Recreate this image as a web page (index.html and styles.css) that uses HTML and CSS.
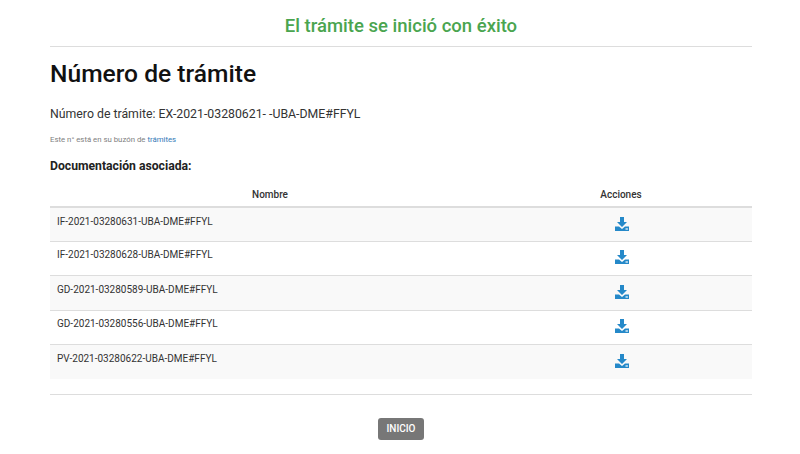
FILE: index.html
```html
<!DOCTYPE html>
<html lang="en">
<head>
    <meta charset="UTF-8">
    <title>Número de trámite</title>
    <link rel="stylesheet" href="styles.css">
</head>
<body>
    <div class="container">
        <h3 class="success-title">El trámite se inició con éxito</h3>
        <hr class="title-rule">

        <h1>Número de trámite</h1>
        <p class="numero">Número de trámite: EX-2021-03280621- -UBA-DME#FFYL</p>
        <p class="nota">Este n° está en su buzón de <a href="#">trámites</a></p>
        <h4>Documentación asociada:</h4>

        <table>
            <thead>
                <tr>
                    <th class="col-nombre">Nombre</th>
                    <th class="col-acciones">Acciones</th>
                </tr>
            </thead>
            <tbody>
                <tr>
                    <td>IF-2021-03280631-UBA-DME#FFYL</td>
                    <td class="accion"><svg class="icon" viewBox="0 0 16 16"><path d="M6 1h4v5h3l-5 5-5-5h3z"/><path d="M1 10.5h4L8 13l3-2.5h4V15H1z"/><rect class="dots" x="11.5" y="12.4" width="2.4" height="1.2"/></svg></td>
                </tr>
                <tr>
                    <td>IF-2021-03280628-UBA-DME#FFYL</td>
                    <td class="accion"><svg class="icon" viewBox="0 0 16 16"><path d="M6 1h4v5h3l-5 5-5-5h3z"/><path d="M1 10.5h4L8 13l3-2.5h4V15H1z"/><rect class="dots" x="11.5" y="12.4" width="2.4" height="1.2"/></svg></td>
                </tr>
                <tr>
                    <td>GD-2021-03280589-UBA-DME#FFYL</td>
                    <td class="accion"><svg class="icon" viewBox="0 0 16 16"><path d="M6 1h4v5h3l-5 5-5-5h3z"/><path d="M1 10.5h4L8 13l3-2.5h4V15H1z"/><rect class="dots" x="11.5" y="12.4" width="2.4" height="1.2"/></svg></td>
                </tr>
                <tr>
                    <td>GD-2021-03280556-UBA-DME#FFYL</td>
                    <td class="accion"><svg class="icon" viewBox="0 0 16 16"><path d="M6 1h4v5h3l-5 5-5-5h3z"/><path d="M1 10.5h4L8 13l3-2.5h4V15H1z"/><rect class="dots" x="11.5" y="12.4" width="2.4" height="1.2"/></svg></td>
                </tr>
                <tr>
                    <td>PV-2021-03280622-UBA-DME#FFYL</td>
                    <td class="accion"><svg class="icon" viewBox="0 0 16 16"><path d="M6 1h4v5h3l-5 5-5-5h3z"/><path d="M1 10.5h4L8 13l3-2.5h4V15H1z"/><rect class="dots" x="11.5" y="12.4" width="2.4" height="1.2"/></svg></td>
                </tr>
            </tbody>
        </table>

        <hr class="bottom-rule">

        <div class="actions">
            <button type="button">INICIO</button>
        </div>
    </div>
</body>
</html>
```

FILE: styles.css
```css
/* General Styles */
body {
    font-family: Roboto, sans-serif;
    background-color: #fff;
    color: #333;
    margin: 0;
}

.container {
    width: 702px;
    margin-left: 50px;
    padding-top: 16px;
}

.success-title {
    text-align: center;
    color: #4aa54f;
    font-size: 18.5px;
    line-height: 21px;
    font-weight: 500;
    margin: 0;
}

hr {
    border: 0;
    margin: 0;
    height: 1px;
    background-color: #ddd;
}

.title-rule {
    margin-top: 9px;
}

h1 {
    color: #111;
    font-size: 24.6px;
    line-height: 28px;
    font-weight: 500;
    margin: 13px 0 0;
}

.numero {
    font-size: 12.3px;
    line-height: 14px;
    margin: 19px 0 0;
}

.nota {
    font-size: 7.8px;
    line-height: 9px;
    color: #808080;
    margin: 14px 0 0;
}

.nota a {
    color: #337ab7;
    text-decoration: none;
}

h4 {
    color: #222;
    font-size: 12.2px;
    line-height: 13px;
    font-weight: 700;
    margin: 16px 0 0;
}

/* Table */
table {
    width: 100%;
    border-collapse: collapse;
    margin-top: 7px;
    font-size: 10px;
}

th {
    font-weight: 500;
    line-height: 12px;
    color: #333;
    padding: 9px 7px 5px;
    border-bottom: 2px solid #ddd;
}

.col-nombre {
    width: 426px;
}

td {
    height: 34.4px;
    box-sizing: border-box;
    padding: 7.6px 7px 0;
    line-height: 12px;
    vertical-align: top;
    border-top: 1px solid #ddd;
}

thead + tbody tr:first-child td {
    border-top: 0;
}

tbody tr:nth-child(odd) td {
    background-color: #f9f9f9;
}

.accion {
    text-align: center;
}

.icon {
    display: block;
    width: 16px;
    height: 16px;
    margin: 0 auto;
    transform: translateX(1px);
    fill: #2589c9;
}

.icon .dots {
    fill: #fff;
}

.bottom-rule {
    margin-top: 15px;
}

.actions {
    text-align: center;
    margin-top: 22px;
}

button {
    font-family: Roboto, sans-serif;
    font-size: 10px;
    font-weight: 500;
    line-height: 12px;
    color: #fff;
    background-color: #777;
    border: 0;
    border-radius: 3px;
    padding: 5px 8px;
    width: 46px;
    height: 22px;
}
```
